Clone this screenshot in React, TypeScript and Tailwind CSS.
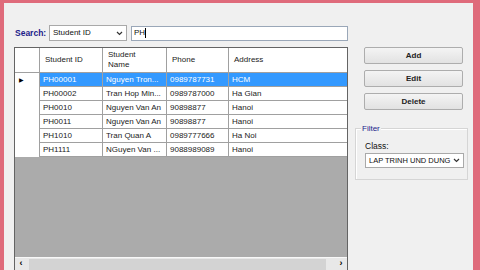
import React from 'react';

const rows = [
  { id: 'PH00001', name: 'Nguyen Tron...', phone: '0989787731', address: 'HCM' },
  { id: 'PH00002', name: 'Tran Hop Min...', phone: '0989787000', address: 'Ha Gian' },
  { id: 'PH0010', name: 'Nguyen Van An', phone: '90898877', address: 'Hanoi' },
  { id: 'PH0011', name: 'Nguyen Van An', phone: '90898877', address: 'Hanoi' },
  { id: 'PH1010', name: 'Tran Quan A', phone: '0989777666', address: 'Ha Noi' },
  { id: 'PH1111', name: 'NGuyen Van ...', phone: '9088989089', address: 'Hanoi' },
];

const colW = ['w-[63px]', 'w-[64px]', 'w-[62px]'];

const Chevron = () => (
  <svg width="7" height="5" viewBox="0 0 7 5" className="shrink-0">
    <path d="M1 1 L3.5 3.5 L6 1" fill="none" stroke="#333" strokeWidth="1.2" />
  </svg>
);

const WinButton: React.FC<{ label: string }> = ({ label }) => (
  <button className="h-[17px] w-[99px] border border-[#adadad] bg-gradient-to-b from-[#f4f4f4] to-[#e2e2e2] text-[8px] font-bold text-[#222] rounded-[2px] flex items-center justify-center">
    {label}
  </button>
);

const App: React.FC = () => {
  return (
    <div
      className="w-[480px] h-[270px] overflow-hidden bg-[#df6b7b] pl-[4px] pt-[3px] pr-[7px]"
      style={{ fontFamily: '"Liberation Sans", Arial, sans-serif' }}
    >
      <div className="h-full bg-[#f0f0f0] flex">
        {/* left column */}
        <div className="ml-[10px] pt-[22px] w-[334px] flex flex-col">
          <div className="flex items-center h-[16px]">
            <span className="w-[35px] text-[8.5px] font-bold text-[#1c1c8a] pl-[1px]">Search:</span>
            <div className="w-[78px] h-[16px] border border-[#a9a9a9] bg-white flex items-center justify-between px-[3px] text-[8px] text-[#111]">
              <span>Student ID</span>
              <Chevron />
            </div>
            <div className="ml-[4px] flex-1 h-[15px] border border-[#9aa7b8] bg-white flex items-center px-[2px] text-[8px] text-[#111]">
              <span>PH</span>
              <span className="w-px h-[10px] bg-black" />
            </div>
          </div>

          <div className="mt-[6px] h-[224px] border-l border-t border-r border-[#646464] bg-[#ababab] flex flex-col">
            {/* header */}
            <div className="flex h-[25px] shrink-0 bg-white text-[8px] text-[#222] border-b border-[#a0a0a0]">
              <div className="w-[25px] border-r border-[#a0a0a0]" />
              <div className={`${colW[0]} border-r border-[#a0a0a0] flex items-center pl-[5px]`}>Student ID</div>
              <div className={`${colW[1]} border-r border-[#a0a0a0] flex items-center pl-[5px] leading-[10px]`}>
                Student<br />Name
              </div>
              <div className={`${colW[2]} border-r border-[#a0a0a0] flex items-center pl-[5px]`}>Phone</div>
              <div className="flex-1 flex items-center pl-[5px]">Address</div>
            </div>
            {rows.map((r, i) => {
              const sel = i === 0;
              return (
                <div key={r.id} className="flex h-[14px] shrink-0 text-[8px]">
                  <div className="w-[25px] bg-white border-r border-[#a0a0a0] flex items-center pl-[4px]">
                    {sel && <span className="text-[6px] text-black">▶</span>}
                  </div>
                  {[r.id, r.name, r.phone, r.address].map((v, j) => (
                    <div
                      key={j}
                      className={`${j === 3 ? 'flex-1' : colW[j] + ' border-r'} border-b border-[#a0a0a0] flex items-center pl-[3px] whitespace-nowrap overflow-hidden ${
                        sel ? 'bg-[#3399ff] text-white border-[#3399ff]' : 'bg-white text-[#222]'
                      }`}
                    >
                      {v}
                    </div>
                  ))}
                </div>
              );
            })}
            <div className="flex-1 bg-[#ababab]" />
            {/* scrollbar */}
            <div className="h-[13px] shrink-0 bg-[#e8e8e8] border-t border-[#f8f8f8] flex items-center">
              <div className="w-[12px] flex items-center justify-center text-[9px] font-bold text-black">‹</div>
              <div className="h-[11px] flex-1 bg-[#d3d3d3] ml-[2px] mr-[9px]" />
              <div className="w-[12px] flex items-center justify-center text-[9px] font-bold text-black">›</div>
            </div>
          </div>
        </div>

        {/* right column */}
        <div className="ml-[7px] w-[113px] flex flex-col">
          <div className="pl-[9px] pt-[44px] flex flex-col gap-[6px]">
            <WinButton label="Add" />
            <WinButton label="Edit" />
            <WinButton label="Delete" />
          </div>
          <div className="relative mt-[18px] h-[52px] border border-[#d5d5d5] shadow-[inset_1px_1px_0_#fff] flex flex-col pl-[9px] pr-[4px] pt-[12px]">
            <span className="absolute -top-[6px] left-[5px] px-[1px] bg-[#f0f0f0] text-[8px] text-[#1c1c8a]">Filter</span>
            <span className="text-[8.5px] text-[#111] leading-[10px]">Class:</span>
            <div className="mt-[2px] w-[99px] h-[15px] border border-[#a9a9a9] bg-white flex items-center justify-between px-[3px] text-[7.5px] text-[#111] whitespace-nowrap">
              <span>LAP TRINH UND DUNG</span>
              <Chevron />
            </div>
          </div>
        </div>
      </div>
    </div>
  );
};

export default App;
